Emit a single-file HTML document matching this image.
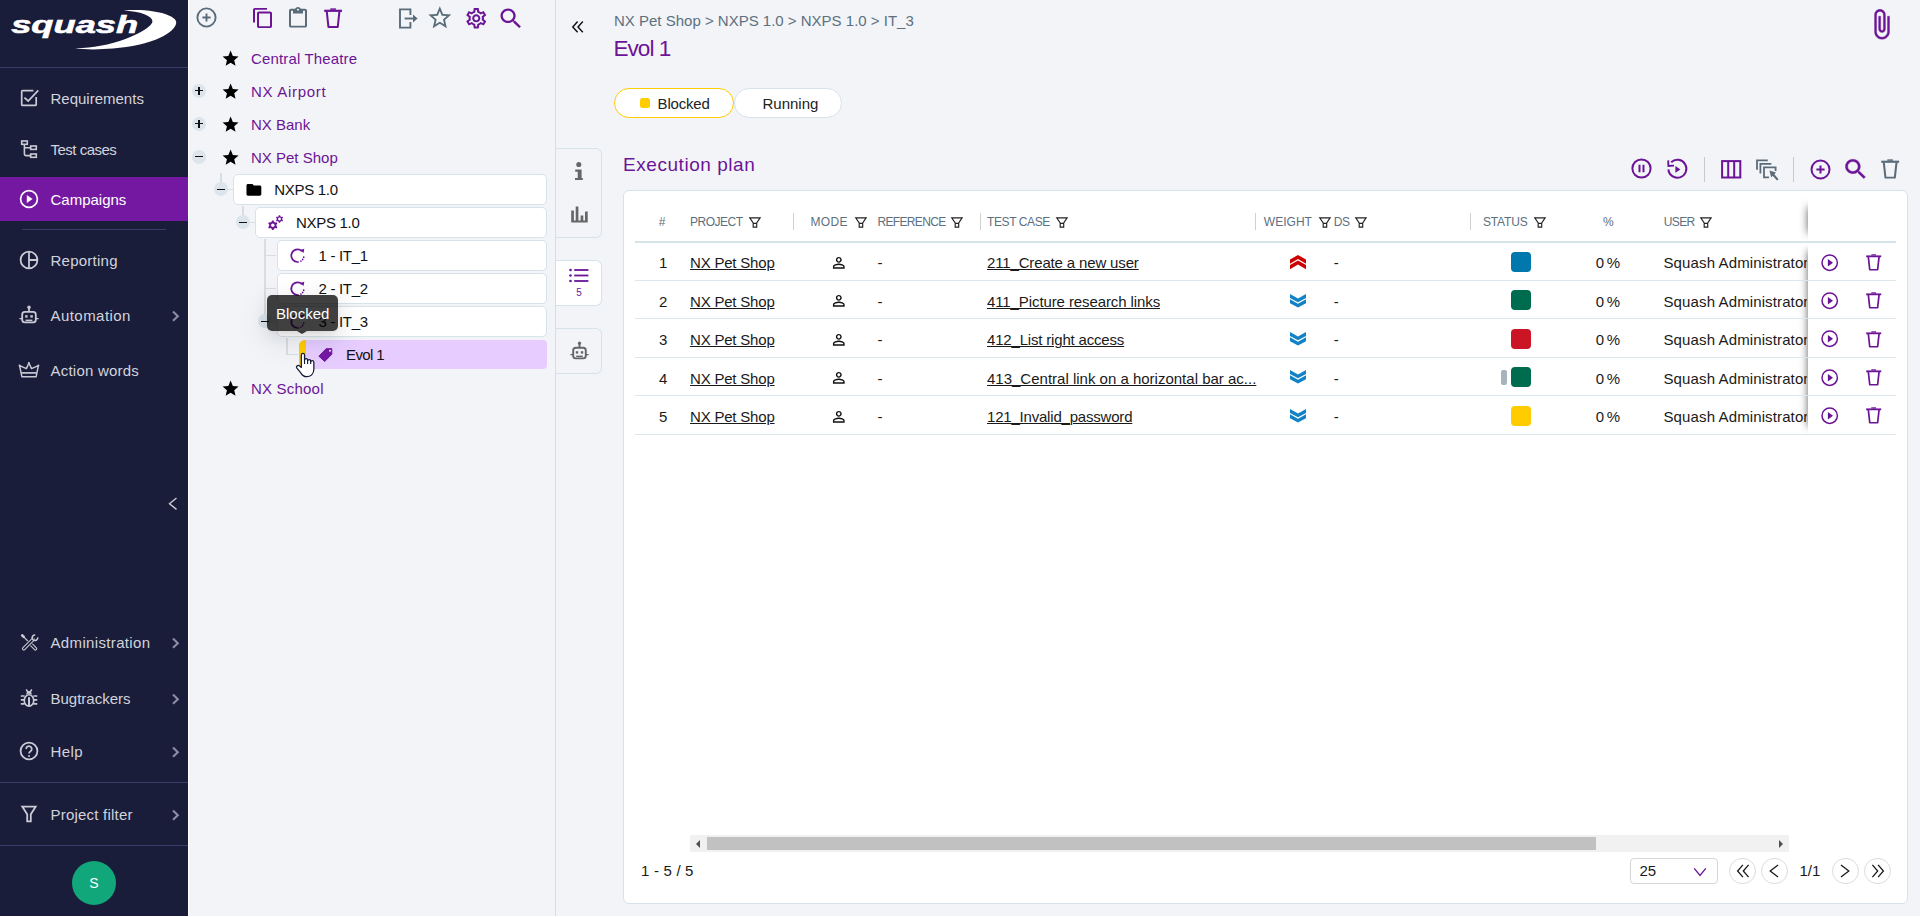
<!DOCTYPE html>
<html lang="en"><head><meta charset="utf-8"><title>Squash TM - Campaigns</title>
<style>
html,body{margin:0;padding:0}
body{width:1920px;height:917px;overflow:hidden;background:#fff;font-family:"Liberation Sans",sans-serif;font-size:15px;color:#1a1a1a;position:relative}
.abs{position:absolute}
.ic{position:absolute;overflow:visible}
.t{position:absolute;white-space:nowrap;line-height:20px}
#side{position:absolute;left:0;top:0;width:188px;height:916px;background:#1a1d39}
#tree{position:absolute;left:189px;top:0;width:366px;height:916px;background:#f3f4f8}
#divider{position:absolute;left:555px;top:0;width:1px;height:916px;background:#d3dfe7}
#main{position:absolute;left:556px;top:0;width:1364px;height:916px;background:#f3f4f8}
.sep{position:absolute;height:1px;background:#3a3c69}
.mi{color:#d2d3dd}
.node{position:absolute;height:28.6px;background:#fff;border:1px solid #d6e3eb;border-radius:5px;box-sizing:content-box}
.tog{position:absolute;width:14px;height:14px;border-radius:50%;background:#dbe5eb}
.tog:before{content:"";position:absolute;left:3px;top:6.4px;width:8px;height:1.2px;background:#111}
.tog.plus:after{content:"";position:absolute;left:6.4px;top:3px;width:1.2px;height:8px;background:#111}
.pl{color:#6b1496}
.hd{position:absolute;top:212px;font-size:12px;color:#5c7080;line-height:20px;white-space:nowrap}
.vsep{position:absolute;top:213px;width:1px;height:17px;background:#d0d0d0}
.row{position:absolute;left:635px;width:1261px;height:1px;background:#dbe6ed}
.cell{position:absolute;white-space:nowrap;line-height:20px;font-size:15px;color:#1a1a1a}
.u{text-decoration:underline;text-underline-offset:1.4px;text-decoration-thickness:1px}
.st{position:absolute;width:20px;height:20px;border-radius:4px}
.pg{position:absolute;width:24.6px;height:24.6px;border:1px solid #dcdcdc;border-radius:50%;top:857.6px;background:#fff}
</style></head><body>

<div id="side">
<svg class="ic" style="left:0;top:0;width:188px;height:60px" viewBox="0 0 188 60">
<path fill="#fff" d="M123.5 10.6 C140 9.2 158 10.8 169.3 15.7 C174.5 18 176.6 20.5 176.2 23 C175.6 28 169 33.5 160.5 37.6 C148 43.6 131 47 112.9 48.6 C100 49.7 84 49.8 75.2 48.3 C85 48 93 47.2 100.3 45.8 C110 43.9 118 41.6 125.4 38.9 C133 36.1 139.5 33.2 144.2 30 C149.5 26.6 152.6 23.6 152.4 21 C152.2 18.6 149.5 16.2 145 14.4 C139 12 131 11 123.5 10.6 Z"/>
<text x="11.2" y="33.4" fill="#fff" stroke="#fff" stroke-width="0.55" font-family="Liberation Sans, sans-serif" font-weight="bold" font-style="italic" font-size="23.6" textLength="127" lengthAdjust="spacingAndGlyphs">squash</text>
</svg>
<div class="sep" style="left:0;top:67px;width:188px"></div>
<div class="t" style="left:50.5px;top:89.0px;color:#d2d3dd;letter-spacing:0px">Requirements</div>
<svg class="ic" style="left:20px;top:88px;width:20px;height:20px" viewBox="0 0 20 20" ><path d="M16.2 9 V16.4 Q16.2 17.4 15.2 17.4 H2.7 Q1.7 17.4 1.7 16.4 V3.7 Q1.7 2.7 2.7 2.7 H13.4" fill="none" stroke="#c9cad6" stroke-width="1.7"/><path d="M4.4 9.6 L8.2 13 L18.3 2.4" fill="none" stroke="#c9cad6" stroke-width="1.7"/></svg>
<div class="t" style="left:50.5px;top:139.7px;color:#d2d3dd;letter-spacing:-0.5px">Test cases</div>
<svg class="ic" style="left:20px;top:139px;width:19px;height:20px" viewBox="0 0 19 20" ><g fill="none" stroke="#c9cad6" stroke-width="1.6"><rect x="1.7" y="2" width="5.6" height="3.3"/><rect x="10.7" y="7" width="5.6" height="3.4"/><rect x="10.7" y="15" width="5.6" height="3.3"/><path d="M4.4 5.4 V15 Q4.4 16.6 6 16.6 H10.7 M4.4 8.7 H10.7"/></g></svg>
<div class="abs" style="left:0;top:177px;width:188px;height:44px;background:#7418a1"></div>
<div class="t" style="left:50.5px;top:189.5px;color:#fff;letter-spacing:0px">Campaigns</div>
<svg class="ic" style="left:19px;top:189px;width:20px;height:20px" viewBox="0 0 20 20" ><circle cx="10" cy="10" r="8.4" fill="none" stroke="#fff" stroke-width="1.7"/><path d="M7.8 5.9 L13.6 10 L7.8 14.1 Z" fill="#fff"/></svg>
<div class="sep" style="left:22px;top:229px;width:144px"></div>
<div class="t" style="left:50.5px;top:250.9px;color:#d2d3dd;letter-spacing:0.25px">Reporting</div>
<svg class="ic" style="left:19px;top:250px;width:20px;height:20px" viewBox="0 0 20 20" ><g fill="none" stroke="#c9cad6" stroke-width="1.8"><circle cx="10" cy="10" r="8.4"/><path d="M10 1.6 V18.4 M10 10 H18.4"/></g></svg>
<div class="t" style="left:50.5px;top:305.7px;color:#d2d3dd;letter-spacing:0.45px">Automation</div>
<svg class="ic" style="left:19px;top:305px;width:20px;height:20px" viewBox="0 0 20 20" ><g fill="none" stroke="#c9cad6" stroke-width="1.8"><rect x="3.2" y="6.8" width="13.6" height="10.6" rx="2.6"/><path d="M10 6.8 V3"/><path d="M0.4 13.6 H3 M17 13.6 H19.6" stroke-width="1.4"/></g><circle cx="10" cy="2.2" r="1.7" fill="#c9cad6"/><rect x="6.2" y="10.2" width="2.4" height="2.4" fill="#c9cad6"/><rect x="11.4" y="10.2" width="2.4" height="2.4" fill="#c9cad6"/><rect x="6.6" y="14.6" width="6.8" height="1.5" fill="#c9cad6"/></svg>
<svg class="ic" style="left:170px;top:308.7px;width:12px;height:14px" viewBox="0 0 12 14"><path d="M3 2.6 L7.8 7.2 L3 11.8" fill="none" stroke="#8c8da4" stroke-width="2.1"/></svg>
<div class="t" style="left:50.5px;top:360.5px;color:#d2d3dd;letter-spacing:0.22px">Action words</div>
<svg class="ic" style="left:18px;top:361px;width:22px;height:18px" viewBox="0 0 22 18" ><g fill="none" stroke="#c9cad6" stroke-width="1.45" stroke-linejoin="round"><path d="M1.6 4.6 L3.9 15.8 H18.1 L20.4 4.6 L13.5 7.6 L10.9 2 L8.4 7.6 Z"/><path d="M3.2 11.9 H18.8" stroke-width="1.7"/></g><circle cx="10.9" cy="1.9" r="1" fill="#c9cad6"/><circle cx="1.5" cy="4.4" r="0.95" fill="#c9cad6"/><circle cx="20.4" cy="4.4" r="0.95" fill="#c9cad6"/></svg>
<svg class="ic" style="left:166px;top:496px;width:14px;height:16px" viewBox="0 0 14 16"><path d="M10.5 2 L3.5 7.7 L10.5 13.4" fill="none" stroke="#c9cad6" stroke-width="1.4"/></svg>
<div class="t" style="left:50.5px;top:632.7px;color:#d2d3dd;letter-spacing:0.35px">Administration</div>
<svg class="ic" style="left:18px;top:629.5px;width:24px;height:24px" viewBox="0 0 24 24" ><g fill="none" stroke-linecap="round"><path d="M4.2 5.4 L5.7 6.9" stroke="#c9cad6" stroke-width="2.7"/><path d="M5.7 6.9 L11 12.2" stroke="#c9cad6" stroke-width="1.3"/><path d="M11.8 13 L17.4 18.7" stroke="#c9cad6" stroke-width="3.7"/><path d="M12.2 13.4 L17.4 18.7" stroke="#1a1d39" stroke-width="1.5"/><path d="M5.8 18.6 L14.6 9.9" stroke="#1a1d39" stroke-width="5" stroke-linecap="butt"/><path d="M5.8 18.6 L15 9.5" stroke="#c9cad6" stroke-width="3.7"/><path d="M5.8 18.6 L15.6 8.9" stroke="#1a1d39" stroke-width="1.5"/><path d="M17.2 4.9 A2.8 2.8 0 1 0 19.7 7.3" stroke="#c9cad6" stroke-width="1.5" stroke-linecap="butt"/></g></svg>
<svg class="ic" style="left:170px;top:635.7px;width:12px;height:14px" viewBox="0 0 12 14"><path d="M3 2.6 L7.8 7.2 L3 11.8" fill="none" stroke="#8c8da4" stroke-width="2.1"/></svg>
<div class="t" style="left:50.5px;top:688.6px;color:#d2d3dd;letter-spacing:0px">Bugtrackers</div>
<svg class="ic" style="left:18px;top:686px;width:24px;height:24px" viewBox="0 0 24 24" ><g fill="none" stroke="#c9cad6"><ellipse cx="11" cy="14.5" rx="4.75" ry="5.75" stroke-width="1.7"/><path d="M2.8 10 H6.6 M2.8 13.9 H6.2 M2.8 17.9 H6.6 M15.4 10 H19.3 M15.8 13.9 H19.3 M15.4 17.9 H19.3" stroke-width="1.7"/><path d="M9.6 5.6 L8.2 3.5 M12.4 5.6 L13.8 3.5" stroke-width="1.6"/></g><path d="M8 8.6 L9.3 5 H12.7 L14 8.6 C12 7.4 10 7.4 8 8.6 Z" fill="#c9cad6"/><rect x="10" y="11.2" width="2.05" height="9.2" fill="#c9cad6"/></svg>
<svg class="ic" style="left:170px;top:691.6px;width:12px;height:14px" viewBox="0 0 12 14"><path d="M3 2.6 L7.8 7.2 L3 11.8" fill="none" stroke="#8c8da4" stroke-width="2.1"/></svg>
<div class="t" style="left:50.5px;top:742.0px;color:#d2d3dd;letter-spacing:0.4px">Help</div>
<svg class="ic" style="left:19px;top:741px;width:20px;height:20px" viewBox="0 0 20 20" ><circle cx="10" cy="10" r="8.4" fill="none" stroke="#c9cad6" stroke-width="1.8"/><path d="M7.2 8 A2.8 2.8 0 1 1 11.6 10.2 C10.4 11 10 11.4 10 12.6" fill="none" stroke="#c9cad6" stroke-width="1.7"/><circle cx="10" cy="15" r="1" fill="#c9cad6"/></svg>
<svg class="ic" style="left:170px;top:745.0px;width:12px;height:14px" viewBox="0 0 12 14"><path d="M3 2.6 L7.8 7.2 L3 11.8" fill="none" stroke="#8c8da4" stroke-width="2.1"/></svg>
<div class="sep" style="left:0;top:782px;width:188px"></div>
<div class="t" style="left:50.5px;top:804.5px;color:#d2d3dd;letter-spacing:0.22px">Project filter</div>
<svg class="ic" style="left:20px;top:805px;width:18px;height:18px" viewBox="0 0 18 18" ><path d="M2.3 1.6 H15.7 L10.8 9.2 V16.4 H7.2 V9.2 Z" fill="none" stroke="#c9cad6" stroke-width="1.8"/></svg>
<svg class="ic" style="left:170px;top:807.5px;width:12px;height:14px" viewBox="0 0 12 14"><path d="M3 2.6 L7.8 7.2 L3 11.8" fill="none" stroke="#8c8da4" stroke-width="2.1"/></svg>
<div class="sep" style="left:0;top:845px;width:188px"></div>
<div class="abs" style="left:72px;top:861px;width:44px;height:44px;border-radius:50%;background:#12a77b"></div>
<div class="t" style="left:72px;top:873px;width:44px;text-align:center;color:#fff;font-size:14px">S</div>
</div>
<div id="tree"></div>
<div id="divider"></div>
<svg class="ic" style="left:195.5px;top:7.3px;width:21px;height:21px" viewBox="0 0 21 21" ><circle cx="10.5" cy="10.5" r="9.1" fill="none" stroke="#5a6c7a" stroke-width="1.9"/><path d="M6.4 10.5 H14.6 M10.5 6.4 V14.6" stroke="#5a6c7a" stroke-width="1.9"/></svg>
<svg class="ic" style="left:250.5px;top:6.8px;width:24px;height:22px" viewBox="0 0 24 24" preserveAspectRatio="none"><path fill="#6b1496" d="M16 1H4c-1.1 0-2 .9-2 2v14h2V3h12V1zm3 4H8c-1.1 0-2 .9-2 2v14c0 1.1.9 2 2 2h11c1.1 0 2-.9 2-2V7c0-1.1-.9-2-2-2zm0 16H8V7h11v14z"/></svg>
<svg class="ic" style="left:286px;top:7px;width:24px;height:20.5px" viewBox="0 0 24 22" preserveAspectRatio="none"><path fill="#5a6c7a" d="M19 2h-4.18C14.4.84 13.3 0 12 0S9.6.84 9.18 2H5c-1.1 0-2 .9-2 2v16c0 1.1.9 2 2 2h14c1.1 0 2-.9 2-2V4c0-1.1-.9-2-2-2zm-7 0c.55 0 1 .45 1 1s-.45 1-1 1-1-.45-1-1 .45-1 1-1zm7 18H5V4h2v3h10V4h2v16z"/></svg>
<svg class="ic" style="left:324px;top:8px;width:18.2px;height:20px" viewBox="0 0 18 20" preserveAspectRatio="none"><g fill="none" stroke="#6b1496" stroke-width="2.0" stroke-linejoin="round"><path d="M2.7 3.2 L4.4 19 H13.6 L15.3 3.2"/><path d="M0.2 2.8 H17.8" stroke-width="2.2"/><path d="M6.2 1.1 H11.8" stroke-width="1.5"/></g></svg>
<svg class="ic" style="left:398.5px;top:7.5px;width:19px;height:21px" viewBox="0 0 19 21" ><g fill="none" stroke="#5a6c7a" stroke-width="1.9"><path d="M11.4 7 V1.4 H1 V19.6 H11.4 V14"/><path d="M5.6 10.5 H17"/></g><path d="M14 6.6 L18.6 10.5 L14 14.4 Z" fill="#5a6c7a"/></svg>
<svg class="ic" style="left:426.4px;top:3.7px;width:27.6px;height:27.6px" viewBox="0 0 24 24" ><path fill="#5a6c7a" d="M22 9.24l-7.19-.62L12 2 9.19 8.63 2 9.24l5.46 4.73L5.82 21 12 17.27 18.18 21l-1.63-7.03L22 9.24zM12 15.4l-3.76 2.27 1-4.28-3.32-2.88 4.38-.38L12 6.1l1.71 4.04 4.38.38-3.32 2.88 1 4.28L12 15.4z"/></svg>
<svg class="ic" style="left:463.8px;top:5.8px;width:24.5px;height:24.5px" viewBox="0 0 24 24" ><path fill="#6b1496" d="M19.43 12.98c.04-.32.07-.64.07-.98 0-.34-.03-.66-.07-.98l2.11-1.65c.19-.15.24-.42.12-.64l-2-3.46c-.09-.16-.26-.25-.44-.25-.06 0-.12.01-.17.03l-2.49 1c-.52-.4-1.08-.73-1.69-.98l-.38-2.65C14.46 2.18 14.25 2 14 2h-4c-.25 0-.46.18-.49.42l-.38 2.65c-.61.25-1.17.59-1.69.98l-2.49-1c-.06-.02-.12-.03-.18-.03-.17 0-.34.09-.43.25l-2 3.46c-.13.22-.07.49.12.64l2.11 1.65c-.04.32-.07.65-.07.98 0 .33.03.66.07.98l-2.11 1.65c-.19.15-.24.42-.12.64l2 3.46c.09.16.26.25.44.25.06 0 .12-.01.17-.03l2.49-1c.52.4 1.08.73 1.69.98l.38 2.65c.03.24.24.42.49.42h4c.25 0 .46-.18.49-.42l.38-2.65c.61-.25 1.17-.59 1.69-.98l2.49 1c.06.02.12.03.18.03.17 0 .34-.09.43-.25l2-3.46c.12-.22.07-.49-.12-.64l-2.11-1.65zm-1.98-1.71c.04.31.05.52.05.73 0 .21-.02.43-.05.73l-.14 1.13.89.7 1.08.84-.7 1.21-1.27-.51-1.04-.42-.9.68c-.43.32-.84.56-1.25.73l-1.06.43-.16 1.13-.2 1.35h-1.4l-.19-1.35-.16-1.13-1.06-.43c-.43-.18-.83-.41-1.23-.71l-.91-.7-1.06.43-1.27.51-.7-1.21 1.08-.84.89-.7-.14-1.13c-.03-.31-.05-.54-.05-.74s.02-.43.05-.73l.14-1.13-.89-.7-1.08-.84.7-1.21 1.27.51 1.04.42.9-.68c.43-.32.84-.56 1.25-.73l1.06-.43.16-1.13.2-1.35h1.39l.19 1.35.16 1.13 1.06.43c.43.18.83.41 1.23.71l.91.7 1.06-.43 1.27-.51.7 1.21-1.07.85-.89.7.14 1.13zM12 8c-2.21 0-4 1.79-4 4s1.79 4 4 4 4-1.79 4-4-1.79-4-4-4zm0 6c-1.1 0-2-.9-2-2s.9-2 2-2 2 .9 2 2-.9 2-2 2z"/></svg>
<svg class="ic" style="left:497.1px;top:4.7px;width:28px;height:27px" viewBox="0 0 24 24" preserveAspectRatio="none"><path fill="#6b1496" d="M15.5 14h-.79l-.28-.27C15.41 12.59 16 11.11 16 9.5 16 5.91 13.09 3 9.5 3S3 5.91 3 9.5 5.91 16 9.5 16c1.61 0 3.09-.59 4.23-1.57l.27.28v.79l5 4.99L20.49 19l-4.99-5zm-6 0C7.01 14 5 11.99 5 9.5S7.01 5 9.5 5 14 7.01 14 9.5 11.99 14 9.5 14z"/></svg>
<svg class="ic" style="left:221.4px;top:48.599999999999994px;width:19.2px;height:19.2px" viewBox="0 0 24 24" ><path fill="#000" d="M12 17.27L18.18 21l-1.64-7.03L22 9.24l-7.19-.61L12 2 9.19 8.63 2 9.24l5.46 4.73L5.82 21z"/></svg>
<div class="t pl" style="left:251px;top:49.3px;letter-spacing:0.15px">Central Theatre</div>
<svg class="ic" style="left:221.4px;top:81.60000000000001px;width:19.2px;height:19.2px" viewBox="0 0 24 24" ><path fill="#000" d="M12 17.27L18.18 21l-1.64-7.03L22 9.24l-7.19-.61L12 2 9.19 8.63 2 9.24l5.46 4.73L5.82 21z"/></svg>
<div class="t pl" style="left:251px;top:82.3px;letter-spacing:0.7px">NX Airport</div>
<div class="tog plus" style="left:192px;top:83.5px"></div>
<svg class="ic" style="left:221.4px;top:114.60000000000001px;width:19.2px;height:19.2px" viewBox="0 0 24 24" ><path fill="#000" d="M12 17.27L18.18 21l-1.64-7.03L22 9.24l-7.19-.61L12 2 9.19 8.63 2 9.24l5.46 4.73L5.82 21z"/></svg>
<div class="t pl" style="left:251px;top:115.3px;letter-spacing:0px">NX Bank</div>
<div class="tog plus" style="left:192px;top:116.5px"></div>
<svg class="ic" style="left:221.4px;top:147.60000000000002px;width:19.2px;height:19.2px" viewBox="0 0 24 24" ><path fill="#000" d="M12 17.27L18.18 21l-1.64-7.03L22 9.24l-7.19-.61L12 2 9.19 8.63 2 9.24l5.46 4.73L5.82 21z"/></svg>
<div class="t pl" style="left:251px;top:148.3px;letter-spacing:0px">NX Pet Shop</div>
<div class="tog minus" style="left:192px;top:149.5px"></div>
<svg class="ic" style="left:221.4px;top:378.59999999999997px;width:19.2px;height:19.2px" viewBox="0 0 24 24" ><path fill="#000" d="M12 17.27L18.18 21l-1.64-7.03L22 9.24l-7.19-.61L12 2 9.19 8.63 2 9.24l5.46 4.73L5.82 21z"/></svg>
<div class="t pl" style="left:251px;top:379.3px;letter-spacing:0.2px">NX School</div>
<div class="abs" style="left:220px;top:173px;width:2px;height:10px;background:#d9dde1"></div>
<div class="abs" style="left:228px;top:188.5px;width:5px;height:1.5px;background:#d9dde1"></div>
<div class="abs" style="left:242px;top:206px;width:2px;height:10px;background:#d9dde1"></div>
<div class="abs" style="left:250px;top:221.5px;width:5px;height:1.5px;background:#d9dde1"></div>
<div class="abs" style="left:264px;top:239px;width:2px;height:76px;background:#d9dde1"></div>
<div class="abs" style="left:266px;top:254.7px;width:10px;height:1.5px;background:#d9dde1"></div>
<div class="abs" style="left:266px;top:287.8px;width:10px;height:1.5px;background:#d9dde1"></div>
<div class="abs" style="left:271px;top:320.5px;width:6px;height:1.5px;background:#d9dde1"></div>
<div class="abs" style="left:286.4px;top:338px;width:1.4px;height:17px;background:#d9dde1"></div>
<div class="abs" style="left:286.4px;top:353.7px;width:11.6px;height:1.4px;background:#d9dde1"></div>
<div class="node" style="left:233px;top:174px;width:312px"></div>
<svg class="ic" style="left:244.8px;top:181.1px;width:17.8px;height:17.8px" viewBox="0 0 24 24" ><path fill="#000" d="M10 4H4c-1.1 0-1.99.9-1.99 2L2 18c0 1.1.9 2 2 2h16c1.1 0 2-.9 2-2V8c0-1.1-.9-2-2-2h-8l-2-2z"/></svg>
<div class="t" style="left:274.3px;top:179.6px;letter-spacing:-0.3px;color:#111">NXPS 1.0</div>
<div class="tog" style="left:214px;top:182.3px"></div>
<div class="node" style="left:255px;top:207px;width:290px"></div>
<svg class="ic" style="left:266px;top:213px;width:20px;height:20px" viewBox="0 0 20 20" ><path fill="#6b1496" fill-rule="evenodd" d="M7.94 15.82 L7.67 17.12 L5.93 17.12 L5.66 15.82 L4.32 15.05 L3.06 15.46 L2.19 13.96 L3.18 13.07 L3.18 11.53 L2.19 10.64 L3.06 9.14 L4.32 9.55 L5.66 8.78 L5.93 7.48 L7.67 7.48 L7.94 8.78 L9.28 9.55 L10.54 9.14 L11.41 10.64 L10.42 11.53 L10.42 13.07 L11.41 13.96 L10.54 15.46 L9.28 15.05 Z M5.05 12.30 a1.75 1.75 0 1 0 3.5 0 a1.75 1.75 0 1 0 -3.5 0 Z M14.37 8.66 L14.16 9.64 L12.84 9.64 L12.63 8.66 L11.63 8.08 L10.67 8.39 L10.02 7.25 L10.76 6.58 L10.76 5.42 L10.02 4.75 L10.67 3.61 L11.63 3.92 L12.63 3.34 L12.84 2.36 L14.16 2.36 L14.37 3.34 L15.37 3.92 L16.33 3.61 L16.98 4.75 L16.24 5.42 L16.24 6.58 L16.98 7.25 L16.33 8.39 L15.37 8.08 Z M12.05 6.00 a1.45 1.45 0 1 0 2.9 0 a1.45 1.45 0 1 0 -2.9 0 Z"/></svg>
<div class="t" style="left:296px;top:212.6px;letter-spacing:-0.3px;color:#111">NXPS 1.0</div>
<div class="tog" style="left:236px;top:215.3px"></div>
<div class="node" style="left:277px;top:240px;width:268px"></div>
<svg class="ic" style="left:289px;top:247px;width:18px;height:18px" viewBox="0 0 18 18" ><path d="M9.69 14.9 A6.3 6.3 0 1 1 12.82 4.02" fill="none" stroke="#6b1496" stroke-width="1.7"/><path d="M11.0 3.1 L15.3 1.8 L14.5 5.9 Z" fill="#6b1496"/><circle cx="11.94" cy="14.04" r="0.85" fill="#6b1496"/><circle cx="13.7" cy="12.4" r="0.85" fill="#6b1496"/><circle cx="14.71" cy="10.22" r="0.85" fill="#6b1496"/></svg>
<div class="t" style="left:318.5px;top:245.6px;letter-spacing:-0.3px;color:#111">1 - IT_1</div>
<div class="node" style="left:277px;top:273px;width:268px"></div>
<svg class="ic" style="left:289px;top:280.1px;width:18px;height:18px" viewBox="0 0 18 18" ><path d="M9.69 14.9 A6.3 6.3 0 1 1 12.82 4.02" fill="none" stroke="#6b1496" stroke-width="1.7"/><path d="M11.0 3.1 L15.3 1.8 L14.5 5.9 Z" fill="#6b1496"/><circle cx="11.94" cy="14.04" r="0.85" fill="#6b1496"/><circle cx="13.7" cy="12.4" r="0.85" fill="#6b1496"/><circle cx="14.71" cy="10.22" r="0.85" fill="#6b1496"/></svg>
<div class="t" style="left:318.5px;top:278.6px;letter-spacing:-0.3px;color:#111">2 - IT_2</div>
<div class="node" style="left:277px;top:306px;width:268px"></div>
<svg class="ic" style="left:289px;top:313.2px;width:18px;height:18px" viewBox="0 0 18 18" ><path d="M9.69 14.9 A6.3 6.3 0 1 1 12.82 4.02" fill="none" stroke="#6b1496" stroke-width="1.7"/><path d="M11.0 3.1 L15.3 1.8 L14.5 5.9 Z" fill="#6b1496"/><circle cx="11.94" cy="14.04" r="0.85" fill="#6b1496"/><circle cx="13.7" cy="12.4" r="0.85" fill="#6b1496"/><circle cx="14.71" cy="10.22" r="0.85" fill="#6b1496"/></svg>
<div class="t" style="left:318.5px;top:311.6px;letter-spacing:-0.3px;color:#111">3 - IT_3</div>
<div class="tog" style="left:257.5px;top:314.3px"></div>
<div class="abs" style="left:299px;top:340px;width:248px;height:29px;background:#e6ccff;border-radius:6px 4px 4px 6px"></div>
<div class="abs" style="left:299px;top:340px;width:7px;height:29px;background:#ffcc00;border-radius:6px 0 0 6px"></div>
<svg class="ic" style="left:317px;top:347px;width:17px;height:17px" viewBox="0 0 17 17" ><path fill="#7418a1" stroke="#7418a1" stroke-width="1" stroke-linejoin="round" d="M9.1 1.7 H14.8 V7.3 L7.7 14.5 L1.9 9.2 Z"/><circle cx="13" cy="3.8" r="1.05" fill="#f4e6ff"/></svg>
<div class="t" style="left:346px;top:344.6px;color:#111;letter-spacing:-0.6px">Evol 1</div>
<div class="abs" style="left:267px;top:295px;width:71px;height:36px;border-radius:5px;background:rgba(0,0,0,.75);box-shadow:0 3px 6px -4px rgba(0,0,0,.12),0 6px 16px 0 rgba(0,0,0,.08),0 9px 28px 8px rgba(0,0,0,.05)"></div>
<div class="abs" style="left:297px;top:331px;width:0;height:0;border-left:5.5px solid transparent;border-right:5.5px solid transparent;border-top:3.5px solid rgba(0,0,0,.75)"></div>
<div class="t" style="left:276px;top:304.3px;color:#fff">Blocked</div>
<svg class="ic" style="left:295px;top:352px;width:20px;height:26px" viewBox="-1 -1 20 26" ><path d="M5.34 14.4 V2.0 C5.34 -0.1 8.53 -0.1 8.53 2.0 V7.2 C8.9 5.1 11.6 5.2 11.6 7.0 V7.9 C12 6 14.67 6.1 14.67 7.8 V8.8 C15 7.1 17.86 7.2 17.86 9.2 V16 C17.86 21 14.5 23.7 10.5 23.7 C7.5 23.7 6 22 4.6 19.6 L0.9 15.2 C-0.4 13.6 1.6 11.6 3.2 12.8 Z" fill="#fff" stroke="#141a33" stroke-width="1.25" stroke-linejoin="round"/><path d="M8.53 7 V10.9 M11.6 7.6 V10.9 M14.67 8.4 V10.9" stroke="#141a33" stroke-width="1.1" fill="none"/></svg>
<div id="main"></div>
<svg class="ic" style="left:571px;top:20px;width:14px;height:14px" viewBox="0 0 14 14"><path d="M6.6 1.6 L1.8 6.9 L6.6 12.2 M11.8 1.6 L7 6.9 L11.8 12.2" fill="none" stroke="#111" stroke-width="1.45"/></svg>
<div class="t" style="left:614px;top:10.6px;color:#5c7080" id="bc">NX Pet Shop &gt; NXPS 1.0 &gt; NXPS 1.0 &gt; IT_3</div>
<div class="t" style="left:613.5px;top:33.8px;color:#6b1496;font-size:22.6px;line-height:30px;letter-spacing:-1px" id="title">Evol 1</div>
<svg class="ic" style="left:1864.8px;top:7.9px;width:32.7px;height:32.7px" viewBox="0 0 24 24" ><path fill="#6b1496" stroke="#6b1496" stroke-width="0.25" d="M16.5 6v11.5c0 2.21-1.79 4-4 4s-4-1.79-4-4V5c0-1.38 1.12-2.5 2.5-2.5s2.5 1.12 2.5 2.5v10.5c0 .55-.45 1-1 1s-1-.45-1-1V6H10v9.5c0 1.38 1.12 2.5 2.5 2.5s2.5-1.12 2.5-2.5V5c0-2.21-1.79-4-4-4S7 2.79 7 5v12.5c0 3.04 2.46 5.5 5.5 5.5s5.5-2.46 5.5-5.5V6h-1.5z"/></svg>
<div class="abs" style="left:614px;top:88px;width:118px;height:28px;border:1px solid #ffcc00;border-radius:15px;background:#fff"></div>
<div class="abs" style="left:639.7px;top:97.6px;width:10.4px;height:10px;border-radius:2.5px;background:#ffcc00"></div>
<div class="t" style="left:657.6px;top:93.6px;color:#222;letter-spacing:-0.2px" id="blk">Blocked</div>
<div class="abs" style="left:734.3px;top:88px;width:105.7px;height:28px;border:1px solid #d6e3eb;border-radius:15px;background:#fff"></div>
<div class="t" style="left:762.5px;top:93.6px;color:#222" id="run">Running</div>
<div class="abs" style="left:556px;top:148px;width:45px;height:88px;border:1px solid #d6e3eb;border-left:none;border-radius:0 6px 6px 0"></div>
<div class="abs" style="left:556px;top:260px;width:45px;height:44px;border:1px solid #d6e3eb;border-left:none;border-radius:0 6px 6px 0;background:#fff"></div>
<div class="abs" style="left:556px;top:328px;width:45px;height:44.3px;border:1px solid #d6e3eb;border-left:none;border-radius:0 6px 6px 0"></div>
<svg class="ic" style="left:574px;top:161px;width:10px;height:20px" viewBox="0 0 10 20" ><circle cx="4.8" cy="3.5" r="2.55" fill="#666"/><path d="M1.2 8.6 H7.6 V17.1 H8.8 V19.1 H1 V17.1 H3.7 V10.7 H1.2 Z" fill="#666"/></svg>
<svg class="ic" style="left:570.5px;top:206px;width:17px;height:16.5px" viewBox="0 0 17 16.5" ><path d="M0.2 4.4 H2.9 V14.4 H4.7 V0.4 H7.4 V14.4 H9.6 V9.6 H12.3 V14.4 H14 V5.6 H16.7 V16.4 H0.2 Z" fill="#666"/></svg>
<svg class="ic" style="left:569px;top:267.5px;width:20px;height:15px" viewBox="0 0 20 15" ><g fill="#6b1496"><circle cx="1.5" cy="2" r="1.3"/><circle cx="1.5" cy="7.5" r="1.3"/><circle cx="1.5" cy="13" r="1.3"/><rect x="5.2" y="1.1" width="14.2" height="1.8"/><rect x="5.2" y="6.6" width="14.2" height="1.8"/><rect x="5.2" y="12.1" width="14.2" height="1.8"/></g></svg>
<div class="t" style="left:569px;top:282.8px;width:20px;text-align:center;color:#6b1496;font-size:10px">5</div>
<svg class="ic" style="left:569.5px;top:341.2px;width:19px;height:20px" viewBox="0 0 19 20" ><g fill="none" stroke="#666" stroke-width="1.9"><rect x="3.2" y="6.8" width="12.6" height="10.6" rx="2.6"/><path d="M9.5 6.8 V3"/><path d="M0.4 13.6 H3 M16 13.6 H18.6" stroke-width="1.4"/></g><circle cx="9.5" cy="2.2" r="1.6" fill="#666"/><rect x="5.8" y="10.2" width="2.4" height="2.4" fill="#666"/><rect x="10.8" y="10.2" width="2.4" height="2.4" fill="#666"/><rect x="6.2" y="14.6" width="6.6" height="1.5" fill="#666"/></svg>
<div class="t" style="left:623px;top:151.5px;color:#6b1496;font-size:19px;line-height:26px;letter-spacing:0.55px" id="ep">Execution plan</div>
<svg class="ic" style="left:1631.1px;top:158.2px;width:21px;height:21px" viewBox="0 0 21 21" ><circle cx="10.5" cy="10.5" r="9.1" fill="none" stroke="#6b1496" stroke-width="2"/><path d="M8.5 6.8 V14.2 M12.5 6.8 V14.2" stroke="#6b1496" stroke-width="2"/></svg>
<svg class="ic" style="left:1666px;top:157.5px;width:22px;height:22px" viewBox="0 0 22 22" ><path d="M5.2 4.2 A9 9 0 1 1 2.4 11.4" fill="none" stroke="#6b1496" stroke-width="2"/><path d="M2.2 2.4 L2.4 8 L8 7.6" fill="none" stroke="#6b1496" stroke-width="1.9"/><path d="M9.4 8 L14.4 11.4 L9.4 14.8 Z" fill="#6b1496"/></svg>
<div class="abs" style="left:1704px;top:157px;width:1px;height:25px;background:#c9c9c9"></div>
<svg class="ic" style="left:1720.6px;top:159.6px;width:20.4px;height:18.6px" viewBox="0 0 20.4 18.6" ><g fill="none" stroke="#6b1496" stroke-width="2"><rect x="1.1" y="1.1" width="18.2" height="16.4"/><path d="M7.2 1 V17.6 M13.2 1 V17.6"/></g></svg>
<svg class="ic" style="left:1755px;top:159px;width:24px;height:22px" viewBox="0 0 24 22" ><g fill="none" stroke="#5a6c7a" stroke-width="1.8"><path d="M2 10.8 V1.4 H12.8"/><path d="M5.4 14.4 V4.8 H16.4"/><path d="M9 18.4 V8.4 H20.6 V12 M8.2 18.4 H14"/></g><path d="M14.4 11.6 L21 13.6 L19.4 15.2 L23.6 20.2 L22 21.6 L17.6 16.8 L16.2 18.6 Z" fill="#5a6c7a"/></svg>
<div class="abs" style="left:1793px;top:157px;width:1px;height:25px;background:#c9c9c9"></div>
<svg class="ic" style="left:1809.5px;top:159.4px;width:21px;height:21px" viewBox="0 0 21 21" ><circle cx="10.5" cy="10.5" r="9" fill="none" stroke="#6b1496" stroke-width="2"/><path d="M6.4 10.5 H14.6 M10.5 6.4 V14.6" stroke="#6b1496" stroke-width="2"/></svg>
<svg class="ic" style="left:1841.7px;top:156px;width:27.5px;height:26.5px" viewBox="0 0 24 24" preserveAspectRatio="none"><path fill="#6b1496" stroke="#6b1496" stroke-width="0.35" d="M15.5 14h-.79l-.28-.27C15.41 12.59 16 11.11 16 9.5 16 5.91 13.09 3 9.5 3S3 5.91 3 9.5 5.91 16 9.5 16c1.61 0 3.09-.59 4.23-1.57l.27.28v.79l5 4.99L20.49 19l-4.99-5zm-6 0C7.01 14 5 11.99 5 9.5S7.01 5 9.5 5 14 7.01 14 9.5 11.99 14 9.5 14z"/></svg>
<svg class="ic" style="left:1881px;top:159.2px;width:18.3px;height:19.6px" viewBox="0 0 18 20" preserveAspectRatio="none"><g fill="none" stroke="#5a6c7a" stroke-width="2.0" stroke-linejoin="round"><path d="M2.7 3.2 L4.4 19 H13.6 L15.3 3.2"/><path d="M0.2 2.8 H17.8" stroke-width="2.2"/><path d="M6.2 1.1 H11.8" stroke-width="1.5"/></g></svg>
<div class="abs" style="left:623px;top:190px;width:1283px;height:711.5px;border:1px solid #d6e3eb;border-radius:6px;background:#fff"></div>
<div class="abs" style="left:1808px;top:198.5px;width:60px;height:42.5px;box-shadow:-8px 0 8px -8px rgba(0,0,0,.62)"></div>
<div class="abs" style="left:1808px;top:243px;width:60px;height:191px;box-shadow:-8px 0 8px -8px rgba(0,0,0,.62)"></div>
<div class="abs" style="left:1808px;top:195px;width:88px;height:245px;background:#fff"></div>
<div class="hd" id="h0" style="left:658.8px;letter-spacing:0px">#</div>
<div class="hd" id="h1" style="left:690px;letter-spacing:-0.5px">PROJECT</div>
<svg class="ic" style="left:749.3px;top:217px;width:11.9px;height:11px" viewBox="0 0 12.5 11" preserveAspectRatio="none"><path d="M0.8 0.9 H11.7 L8.1 6 V10.2 H4.4 V6 Z M4.4 6.4 H8.1" fill="none" stroke="#222" stroke-width="1.2"/></svg>
<div class="hd" id="h2" style="left:810.5px;letter-spacing:0.37px">MODE</div>
<svg class="ic" style="left:854.5px;top:217px;width:11.9px;height:11px" viewBox="0 0 12.5 11" preserveAspectRatio="none"><path d="M0.8 0.9 H11.7 L8.1 6 V10.2 H4.4 V6 Z M4.4 6.4 H8.1" fill="none" stroke="#222" stroke-width="1.2"/></svg>
<div class="hd" id="h3" style="left:877.5px;letter-spacing:-0.67px">REFERENCE</div>
<svg class="ic" style="left:951.0999999999999px;top:217px;width:11.9px;height:11px" viewBox="0 0 12.5 11" preserveAspectRatio="none"><path d="M0.8 0.9 H11.7 L8.1 6 V10.2 H4.4 V6 Z M4.4 6.4 H8.1" fill="none" stroke="#222" stroke-width="1.2"/></svg>
<div class="hd" id="h4" style="left:987px;letter-spacing:-0.39px">TEST CASE</div>
<svg class="ic" style="left:1056.3px;top:217px;width:11.9px;height:11px" viewBox="0 0 12.5 11" preserveAspectRatio="none"><path d="M0.8 0.9 H11.7 L8.1 6 V10.2 H4.4 V6 Z M4.4 6.4 H8.1" fill="none" stroke="#222" stroke-width="1.2"/></svg>
<div class="hd" id="h5" style="left:1263.8px;letter-spacing:0.03px">WEIGHT</div>
<svg class="ic" style="left:1319.0px;top:217px;width:11.9px;height:11px" viewBox="0 0 12.5 11" preserveAspectRatio="none"><path d="M0.8 0.9 H11.7 L8.1 6 V10.2 H4.4 V6 Z M4.4 6.4 H8.1" fill="none" stroke="#222" stroke-width="1.2"/></svg>
<div class="hd" id="h6" style="left:1333.8px;letter-spacing:-0.5px">DS</div>
<svg class="ic" style="left:1355.3px;top:217px;width:11.9px;height:11px" viewBox="0 0 12.5 11" preserveAspectRatio="none"><path d="M0.8 0.9 H11.7 L8.1 6 V10.2 H4.4 V6 Z M4.4 6.4 H8.1" fill="none" stroke="#222" stroke-width="1.2"/></svg>
<div class="hd" id="h7" style="left:1483px;letter-spacing:-0.18px">STATUS</div>
<svg class="ic" style="left:1534.0px;top:217px;width:11.9px;height:11px" viewBox="0 0 12.5 11" preserveAspectRatio="none"><path d="M0.8 0.9 H11.7 L8.1 6 V10.2 H4.4 V6 Z M4.4 6.4 H8.1" fill="none" stroke="#222" stroke-width="1.2"/></svg>
<div class="hd" id="h8" style="left:1603px;letter-spacing:0px">%</div>
<div class="hd" id="h9" style="left:1663.8px;letter-spacing:-0.65px">USER</div>
<svg class="ic" style="left:1700.3px;top:217px;width:11.9px;height:11px" viewBox="0 0 12.5 11" preserveAspectRatio="none"><path d="M0.8 0.9 H11.7 L8.1 6 V10.2 H4.4 V6 Z M4.4 6.4 H8.1" fill="none" stroke="#222" stroke-width="1.2"/></svg>
<div class="vsep" style="left:793px"></div>
<div class="vsep" style="left:980px"></div>
<div class="vsep" style="left:1255px"></div>
<div class="vsep" style="left:1470px"></div>
<div class="abs" style="left:635px;top:241px;width:1261px;height:2px;background:#d6e3eb"></div>
<div class="row" style="top:280.0px"></div>
<div class="cell" style="left:658.9px;top:253.1px">1</div>
<div class="cell u" style="left:690px;top:253.1px;letter-spacing:-0.2px" id="p0">NX Pet Shop</div>
<svg class="ic" style="left:830px;top:253.7px;width:17.6px;height:17.6px" viewBox="0 0 24 24" ><path fill="#111" d="M12 5.9c1.16 0 2.1.94 2.1 2.1s-.94 2.1-2.1 2.1S9.900 9.160 9.900 8s.94-2.100 2.100-2.100m0 9c2.970 0 6.100 1.460 6.100 2.100v1.100H5.900V17c0-.640 3.130-2.100 6.100-2.100M12 4C9.790 4 8 5.790 8 8s1.790 4 4 4 4-1.790 4-4-1.790-4-4-4zm0 9c-2.670 0-8 1.340-8 4v3h16v-3c0-2.660-5.330-4-8-4z"/></svg>
<div class="cell" style="left:877.5px;top:253.1px">-</div>
<div class="cell u" style="left:987px;top:253.1px;letter-spacing:-0.15px" id="tc0">211_Create a new user</div>
<svg class="ic" style="left:1290px;top:254.9px;width:16px;height:14.2px" viewBox="0 0 16 14.2" ><path d="M8 0 L16 4.6 V8.7 L8 4.1 L0 8.7 V4.6 Z M8 5.5 L16 10.1 V14.2 L8 9.6 L0 14.2 V10.1 Z" fill="#cc0000"/></svg>
<div class="cell" style="left:1333.8px;top:253.1px">-</div>
<div class="st" style="left:1511px;top:252.0px;background:#0078ae"></div>
<div class="cell" style="left:1595.8px;top:253.1px;letter-spacing:-0.8px">0 %</div>
<div class="cell" style="left:1663.5px;top:253.1px;width:143.6px;overflow:hidden;letter-spacing:0.12px" id="u0">Squash Administrator</div>
<svg class="ic" style="left:1821.3px;top:253.5px;width:17.4px;height:17.4px" viewBox="0 0 17.4 17.4" ><circle cx="8.7" cy="8.7" r="7.7" fill="none" stroke="#6b1496" stroke-width="1.5"/><path d="M6.9 5 L12 8.7 L6.9 12.4 Z" fill="#6b1496"/></svg>
<svg class="ic" style="left:1866px;top:253.6px;width:15.4px;height:16.6px" viewBox="0 0 18 20" preserveAspectRatio="none"><g fill="none" stroke="#6b1496" stroke-width="2.0" stroke-linejoin="round"><path d="M2.7 3.2 L4.4 19 H13.6 L15.3 3.2"/><path d="M0.2 2.8 H17.8" stroke-width="2.2"/><path d="M6.2 1.1 H11.8" stroke-width="1.5"/></g></svg>
<div class="row" style="top:318.4px"></div>
<div class="cell" style="left:658.9px;top:291.6px">2</div>
<div class="cell u" style="left:690px;top:291.6px;letter-spacing:-0.2px" id="p1">NX Pet Shop</div>
<svg class="ic" style="left:830px;top:292.15px;width:17.6px;height:17.6px" viewBox="0 0 24 24" ><path fill="#111" d="M12 5.9c1.16 0 2.1.94 2.1 2.1s-.94 2.1-2.1 2.1S9.900 9.160 9.900 8s.94-2.100 2.100-2.100m0 9c2.970 0 6.100 1.460 6.100 2.100v1.100H5.900V17c0-.640 3.130-2.100 6.100-2.100M12 4C9.790 4 8 5.790 8 8s1.790 4 4 4 4-1.790 4-4-1.790-4-4-4zm0 9c-2.670 0-8 1.340-8 4v3h16v-3c0-2.660-5.330-4-8-4z"/></svg>
<div class="cell" style="left:877.5px;top:291.6px">-</div>
<div class="cell u" style="left:987px;top:291.6px;letter-spacing:-0.1px" id="tc1">411_Picture research links</div>
<svg class="ic" style="left:1290px;top:293.55px;width:16px;height:13.6px" viewBox="0 0 16 13.6" ><path d="M8 13.6 L16 9.2 V5.3 L8 9.7 L0 5.3 V9.2 Z M8 8.3 L16 3.9 V0 L8 4.4 L0 0 V3.9 Z" fill="#1282c6"/></svg>
<div class="cell" style="left:1333.8px;top:291.6px">-</div>
<div class="st" style="left:1511px;top:290.4px;background:#006c4f"></div>
<div class="cell" style="left:1595.8px;top:291.6px;letter-spacing:-0.8px">0 %</div>
<div class="cell" style="left:1663.5px;top:291.6px;width:143.6px;overflow:hidden;letter-spacing:0.12px" id="u1">Squash Administrator</div>
<svg class="ic" style="left:1821.3px;top:291.95px;width:17.4px;height:17.4px" viewBox="0 0 17.4 17.4" ><circle cx="8.7" cy="8.7" r="7.7" fill="none" stroke="#6b1496" stroke-width="1.5"/><path d="M6.9 5 L12 8.7 L6.9 12.4 Z" fill="#6b1496"/></svg>
<svg class="ic" style="left:1866px;top:292.05px;width:15.4px;height:16.6px" viewBox="0 0 18 20" preserveAspectRatio="none"><g fill="none" stroke="#6b1496" stroke-width="2.0" stroke-linejoin="round"><path d="M2.7 3.2 L4.4 19 H13.6 L15.3 3.2"/><path d="M0.2 2.8 H17.8" stroke-width="2.2"/><path d="M6.2 1.1 H11.8" stroke-width="1.5"/></g></svg>
<div class="row" style="top:356.8px"></div>
<div class="cell" style="left:658.9px;top:330.0px">3</div>
<div class="cell u" style="left:690px;top:330.0px;letter-spacing:-0.2px" id="p2">NX Pet Shop</div>
<svg class="ic" style="left:830px;top:330.59999999999997px;width:17.6px;height:17.6px" viewBox="0 0 24 24" ><path fill="#111" d="M12 5.9c1.16 0 2.1.94 2.1 2.1s-.94 2.1-2.1 2.1S9.900 9.160 9.900 8s.94-2.100 2.100-2.100m0 9c2.970 0 6.100 1.460 6.100 2.100v1.100H5.900V17c0-.640 3.130-2.100 6.100-2.100M12 4C9.790 4 8 5.790 8 8s1.790 4 4 4 4-1.790 4-4-1.790-4-4-4zm0 9c-2.670 0-8 1.340-8 4v3h16v-3c0-2.660-5.330-4-8-4z"/></svg>
<div class="cell" style="left:877.5px;top:330.0px">-</div>
<div class="cell u" style="left:987px;top:330.0px;letter-spacing:-0.18px" id="tc2">412_List right access</div>
<svg class="ic" style="left:1290px;top:332.0px;width:16px;height:13.6px" viewBox="0 0 16 13.6" ><path d="M8 13.6 L16 9.2 V5.3 L8 9.7 L0 5.3 V9.2 Z M8 8.3 L16 3.9 V0 L8 4.4 L0 0 V3.9 Z" fill="#1282c6"/></svg>
<div class="cell" style="left:1333.8px;top:330.0px">-</div>
<div class="st" style="left:1511px;top:328.9px;background:#cb1524"></div>
<div class="cell" style="left:1595.8px;top:330.0px;letter-spacing:-0.8px">0 %</div>
<div class="cell" style="left:1663.5px;top:330.0px;width:143.6px;overflow:hidden;letter-spacing:0.12px" id="u2">Squash Administrator</div>
<svg class="ic" style="left:1821.3px;top:330.4px;width:17.4px;height:17.4px" viewBox="0 0 17.4 17.4" ><circle cx="8.7" cy="8.7" r="7.7" fill="none" stroke="#6b1496" stroke-width="1.5"/><path d="M6.9 5 L12 8.7 L6.9 12.4 Z" fill="#6b1496"/></svg>
<svg class="ic" style="left:1866px;top:330.5px;width:15.4px;height:16.6px" viewBox="0 0 18 20" preserveAspectRatio="none"><g fill="none" stroke="#6b1496" stroke-width="2.0" stroke-linejoin="round"><path d="M2.7 3.2 L4.4 19 H13.6 L15.3 3.2"/><path d="M0.2 2.8 H17.8" stroke-width="2.2"/><path d="M6.2 1.1 H11.8" stroke-width="1.5"/></g></svg>
<div class="row" style="top:395.2px"></div>
<div class="cell" style="left:658.9px;top:368.5px">4</div>
<div class="cell u" style="left:690px;top:368.5px;letter-spacing:-0.2px" id="p3">NX Pet Shop</div>
<svg class="ic" style="left:830px;top:369.05px;width:17.6px;height:17.6px" viewBox="0 0 24 24" ><path fill="#111" d="M12 5.9c1.16 0 2.1.94 2.1 2.1s-.94 2.1-2.1 2.1S9.900 9.160 9.900 8s.94-2.100 2.100-2.100m0 9c2.970 0 6.100 1.460 6.100 2.100v1.100H5.900V17c0-.640 3.130-2.100 6.100-2.100M12 4C9.790 4 8 5.790 8 8s1.790 4 4 4 4-1.790 4-4-1.790-4-4-4zm0 9c-2.670 0-8 1.340-8 4v3h16v-3c0-2.660-5.330-4-8-4z"/></svg>
<div class="cell" style="left:877.5px;top:368.5px">-</div>
<div class="cell u" style="left:987px;top:368.5px;letter-spacing:0px" id="tc3">413_Central link on a horizontal bar ac...</div>
<svg class="ic" style="left:1290px;top:370.45000000000005px;width:16px;height:13.6px" viewBox="0 0 16 13.6" ><path d="M8 13.6 L16 9.2 V5.3 L8 9.7 L0 5.3 V9.2 Z M8 8.3 L16 3.9 V0 L8 4.4 L0 0 V3.9 Z" fill="#1282c6"/></svg>
<div class="cell" style="left:1333.8px;top:368.5px">-</div>
<div class="abs" style="left:1501px;top:369.9px;width:5.6px;height:15px;border-radius:2px;background:#a5b4bd"></div>
<div class="st" style="left:1511px;top:367.4px;background:#006c4f"></div>
<div class="cell" style="left:1595.8px;top:368.5px;letter-spacing:-0.8px">0 %</div>
<div class="cell" style="left:1663.5px;top:368.5px;width:143.6px;overflow:hidden;letter-spacing:0.12px" id="u3">Squash Administrator</div>
<svg class="ic" style="left:1821.3px;top:368.85px;width:17.4px;height:17.4px" viewBox="0 0 17.4 17.4" ><circle cx="8.7" cy="8.7" r="7.7" fill="none" stroke="#6b1496" stroke-width="1.5"/><path d="M6.9 5 L12 8.7 L6.9 12.4 Z" fill="#6b1496"/></svg>
<svg class="ic" style="left:1866px;top:368.95000000000005px;width:15.4px;height:16.6px" viewBox="0 0 18 20" preserveAspectRatio="none"><g fill="none" stroke="#6b1496" stroke-width="2.0" stroke-linejoin="round"><path d="M2.7 3.2 L4.4 19 H13.6 L15.3 3.2"/><path d="M0.2 2.8 H17.8" stroke-width="2.2"/><path d="M6.2 1.1 H11.8" stroke-width="1.5"/></g></svg>
<div class="row" style="top:433.6px"></div>
<div class="cell" style="left:658.9px;top:406.9px">5</div>
<div class="cell u" style="left:690px;top:406.9px;letter-spacing:-0.2px" id="p4">NX Pet Shop</div>
<svg class="ic" style="left:830px;top:407.5px;width:17.6px;height:17.6px" viewBox="0 0 24 24" ><path fill="#111" d="M12 5.9c1.16 0 2.1.94 2.1 2.1s-.94 2.1-2.1 2.1S9.900 9.160 9.900 8s.94-2.100 2.100-2.100m0 9c2.970 0 6.100 1.460 6.100 2.100v1.100H5.900V17c0-.640 3.130-2.100 6.100-2.100M12 4C9.790 4 8 5.790 8 8s1.790 4 4 4 4-1.790 4-4-1.790-4-4-4zm0 9c-2.670 0-8 1.340-8 4v3h16v-3c0-2.660-5.330-4-8-4z"/></svg>
<div class="cell" style="left:877.5px;top:406.9px">-</div>
<div class="cell u" style="left:987px;top:406.9px;letter-spacing:-0.2px" id="tc4">121_Invalid_password</div>
<svg class="ic" style="left:1290px;top:408.90000000000003px;width:16px;height:13.6px" viewBox="0 0 16 13.6" ><path d="M8 13.6 L16 9.2 V5.3 L8 9.7 L0 5.3 V9.2 Z M8 8.3 L16 3.9 V0 L8 4.4 L0 0 V3.9 Z" fill="#1282c6"/></svg>
<div class="cell" style="left:1333.8px;top:406.9px">-</div>
<div class="st" style="left:1511px;top:405.8px;background:#ffcc00"></div>
<div class="cell" style="left:1595.8px;top:406.9px;letter-spacing:-0.8px">0 %</div>
<div class="cell" style="left:1663.5px;top:406.9px;width:143.6px;overflow:hidden;letter-spacing:0.12px" id="u4">Squash Administrator</div>
<svg class="ic" style="left:1821.3px;top:407.3px;width:17.4px;height:17.4px" viewBox="0 0 17.4 17.4" ><circle cx="8.7" cy="8.7" r="7.7" fill="none" stroke="#6b1496" stroke-width="1.5"/><path d="M6.9 5 L12 8.7 L6.9 12.4 Z" fill="#6b1496"/></svg>
<svg class="ic" style="left:1866px;top:407.40000000000003px;width:15.4px;height:16.6px" viewBox="0 0 18 20" preserveAspectRatio="none"><g fill="none" stroke="#6b1496" stroke-width="2.0" stroke-linejoin="round"><path d="M2.7 3.2 L4.4 19 H13.6 L15.3 3.2"/><path d="M0.2 2.8 H17.8" stroke-width="2.2"/><path d="M6.2 1.1 H11.8" stroke-width="1.5"/></g></svg>
<div class="abs" style="left:690px;top:835px;width:1099px;height:17px;background:#f1f1f1"></div>
<div class="abs" style="left:707px;top:837px;width:889px;height:13px;background:#c1c1c1"></div>
<div class="abs" style="left:696px;top:839.5px;width:0;height:0;border-top:4px solid transparent;border-bottom:4px solid transparent;border-right:4.5px solid #505050"></div>
<div class="abs" style="left:1778.5px;top:839.5px;width:0;height:0;border-top:4px solid transparent;border-bottom:4px solid transparent;border-left:4.5px solid #505050"></div>
<div class="cell" style="left:641px;top:861.2px;letter-spacing:0.2px" id="cnt">1 - 5 / 5</div>
<div class="abs" style="left:1630px;top:858px;width:86px;height:24px;border:1px solid #d6d6d6;border-radius:4px;background:#fff"></div>
<div class="cell" style="left:1639.5px;top:861.2px">25</div>
<svg class="ic" style="left:1693px;top:867px;width:14px;height:10px" viewBox="0 0 14 10"><path d="M1.2 1.4 L7 8.4 L12.8 1.4" fill="none" stroke="#6b1496" stroke-width="1.3"/></svg>
<div class="pg" style="left:1729.2px"></div>
<svg class="ic" style="left:1735.5px;top:863.8px;width:14px;height:14px" viewBox="0 0 14 14"><path d="M6.9 0.9 L1.6 7 L6.9 13.1 M12.6 0.9 L7.3 7 L12.6 13.1" fill="none" stroke="#1a1a1a" stroke-width="1.3"/></svg>
<div class="pg" style="left:1761.1px"></div>
<svg class="ic" style="left:1767.4px;top:863.8px;width:14px;height:14px" viewBox="0 0 14 14"><path d="M11 0.9 L3.2 7 L11 13.1" fill="none" stroke="#1a1a1a" stroke-width="1.3"/></svg>
<div class="pg" style="left:1832.1px"></div>
<svg class="ic" style="left:1838.4px;top:863.8px;width:14px;height:14px" viewBox="0 0 14 14"><path d="M3 0.9 L10.8 7 L3 13.1" fill="none" stroke="#1a1a1a" stroke-width="1.3"/></svg>
<div class="pg" style="left:1864.2px"></div>
<svg class="ic" style="left:1870.5px;top:863.8px;width:14px;height:14px" viewBox="0 0 14 14"><path d="M1.4 0.9 L6.7 7 L1.4 13.1 M7.1 0.9 L12.4 7 L7.1 13.1" fill="none" stroke="#1a1a1a" stroke-width="1.3"/></svg>
<div class="cell" style="left:1799.5px;top:860.8px" id="pn">1/1</div>
</body></html>
